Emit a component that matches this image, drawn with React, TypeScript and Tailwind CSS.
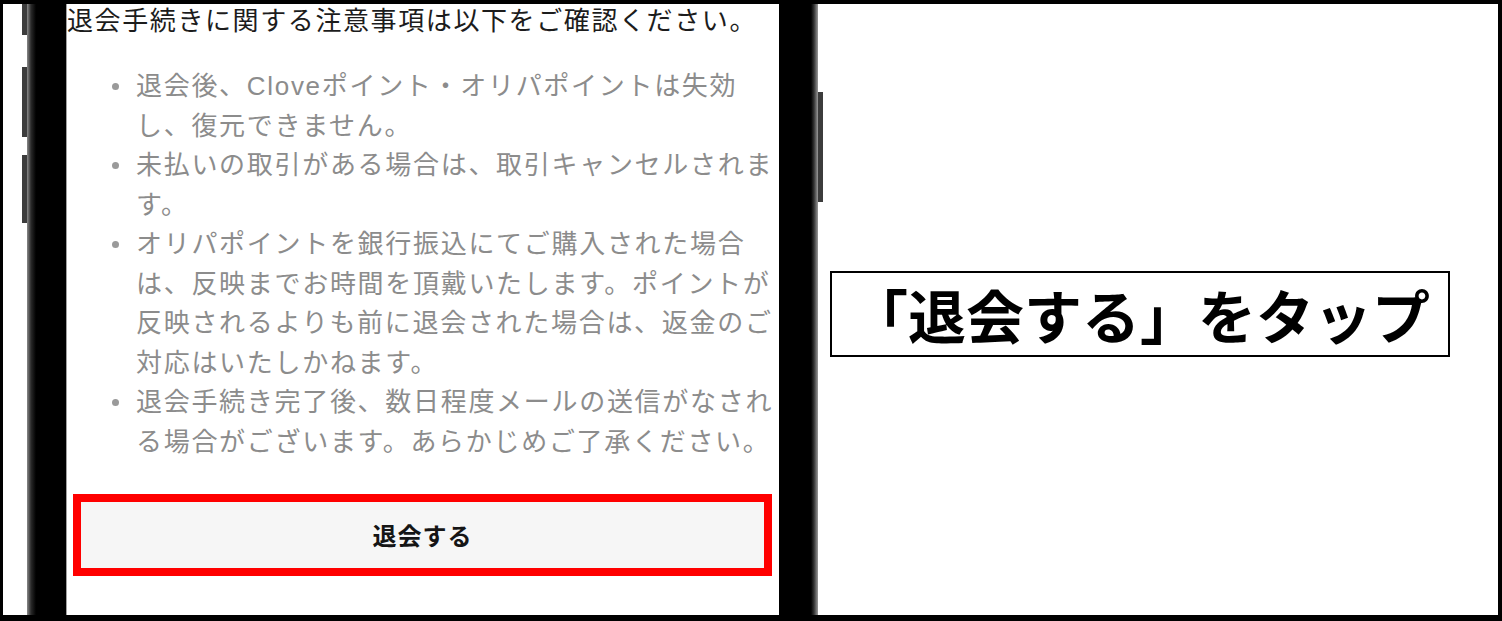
const jp = { fontFamily: '"Liberation Sans", "Noto Sans CJK JP", sans-serif' }
const jpOnly = { fontFamily: '"Noto Sans CJK JP", sans-serif' }

const notes: string[][] = [
  ['退会後、Cloveポイント・オリパポイントは失効', 'し、復元できません。'],
  ['未払いの取引がある場合は、取引キャンセルされま', 'す。'],
  [
    'オリパポイントを銀行振込にてご購入された場合',
    'は、反映までお時間を頂戴いたします。ポイントが',
    '反映されるよりも前に退会された場合は、返金のご',
    '対応はいたしかねます。',
  ],
  ['退会手続き完了後、数日程度メールの送信がなされ', 'る場合がございます。あらかじめご了承ください。'],
]

function PhoneScreen() {
  return (
    <div className="w-[713px] h-full bg-white border-l border-[#a0a0a0] flex flex-col overflow-hidden">
      <p style={jp} className="text-[26px] leading-[34px] tracking-[1.6px] text-[#1c1c1c] whitespace-nowrap">
        退会手続きに関する注意事項は以下をご確認ください。
      </p>

      <ul className="mt-[29px] pl-[45px] flex flex-col">
        {notes.map((lines, i) => (
          <li key={i} className="flex">
            <div className="h-[39.5px] flex items-center">
              <span className="w-[7px] h-[7px] rounded-full bg-[#9a9a9a]" />
            </div>
            <p style={jp} className="ml-[17px] text-[26px] leading-[39.5px] tracking-[1.7px] text-[#8c8c8c] whitespace-nowrap">
              {lines.map((l, j) => (
                <span key={j} className="block">{l}</span>
              ))}
            </p>
          </li>
        ))}
      </ul>

      <div className="mt-[32px] ml-[6px] w-[699px] h-[82px] border-[8px] border-[#ff0000] bg-[#f6f6f6] flex items-center justify-center">
        <span style={jpOnly} className="text-[24px] font-bold text-[#151515] tracking-[1px]">退会する</span>
      </div>
    </div>
  )
}

export default function App() {
  return (
    <div className="w-[1502px] h-[621px] bg-white border-black border-t-4 border-r-4 border-b-[6px] border-l-[3px] flex overflow-hidden">
      <div className="w-[19px] shrink-0" />

      {/* side buttons, left */}
      <div className="w-[5px] shrink-0 flex flex-col">
        <div className="h-[31px] bg-[#3c3c3c]" />
        <div className="mt-[32px] h-[70px] bg-[#3c3c3c]" />
        <div className="mt-[18px] h-[68px] bg-[#3c3c3c]" />
      </div>

      <div className="w-[39px] shrink-0 bg-[linear-gradient(to_right,#8a8a8a_0px,#2a2a2a_4px,#000_9px)]" />

      <PhoneScreen />

      <div className="w-[39px] shrink-0 bg-[linear-gradient(to_right,#000_32px,#333_35px,#9a9a9a_39px)]" />

      {/* side button, right */}
      <div className="w-[5px] shrink-0 flex flex-col">
        <div className="mt-[88px] h-[110px] bg-[#3c3c3c]" />
      </div>

      <div className="flex-1 pt-[267px] pl-[7px]">
        <div className="w-[620px] h-[86px] border-2 border-black flex items-center justify-center">
          <span style={jpOnly} className="text-[58px] leading-none font-bold text-black">
            「退会する」をタップ
          </span>
        </div>
      </div>
    </div>
  )
}
